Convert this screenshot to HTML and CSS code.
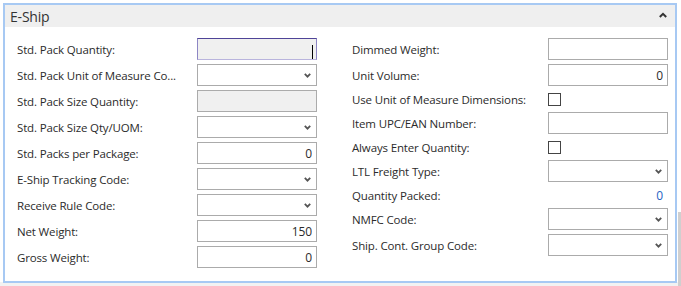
FILE: index.html
```html
<!DOCTYPE html>
<html lang="en">

<head>
    <meta charset="UTF-8">
    <title>Item Card - E-Ship</title>
    <link rel="stylesheet" href="styles.css">
</head>

<body>
    <div id="page">
        <!-- FastTab: E-Ship -->
        <div class="fasttab">
            <div class="fasttab-head">
                <span class="fasttab-title">E-Ship</span>
                <svg class="collapse-icon" width="8" height="6" viewBox="0 0 8 6">
                    <path d="M0.8 5 L4 1.8 L7.2 5" fill="none" stroke="#333" stroke-width="2"/>
                </svg>
            </div>
            <div class="fasttab-body">
                <!-- Left column -->
                <div class="field-col left-col">
                    <div class="field-row">
                        <label>Std. Pack Quantity:</label>
                        <div class="ctl">
                            <input class="txt dim focused" type="text" value="" disabled>
                            <span class="caret"></span>
                        </div>
                    </div>
                    <div class="field-row">
                        <label>Std. Pack Unit of Measure Co...</label>
                        <div class="ctl">
                            <select class="sel"><option></option></select>
                            <svg class="chev" width="7" height="5" viewBox="0 0 7 5"><path d="M0.8 0.8 L3.5 3.6 L6.2 0.8" fill="none" stroke="#555" stroke-width="1.8"/></svg>
                        </div>
                    </div>
                    <div class="field-row">
                        <label>Std. Pack Size Quantity:</label>
                        <div class="ctl"><input class="txt dim" type="text" value="" disabled></div>
                    </div>
                    <div class="field-row">
                        <label>Std. Pack Size Qty/UOM:</label>
                        <div class="ctl">
                            <select class="sel"><option></option></select>
                            <svg class="chev" width="7" height="5" viewBox="0 0 7 5"><path d="M0.8 0.8 L3.5 3.6 L6.2 0.8" fill="none" stroke="#555" stroke-width="1.8"/></svg>
                        </div>
                    </div>
                    <div class="field-row">
                        <label>Std. Packs per Package:</label>
                        <div class="ctl"><input class="txt num" type="text" value="0"></div>
                    </div>
                    <div class="field-row">
                        <label>E-Ship Tracking Code:</label>
                        <div class="ctl">
                            <select class="sel"><option></option></select>
                            <svg class="chev" width="7" height="5" viewBox="0 0 7 5"><path d="M0.8 0.8 L3.5 3.6 L6.2 0.8" fill="none" stroke="#555" stroke-width="1.8"/></svg>
                        </div>
                    </div>
                    <div class="field-row">
                        <label>Receive Rule Code:</label>
                        <div class="ctl">
                            <select class="sel"><option></option></select>
                            <svg class="chev" width="7" height="5" viewBox="0 0 7 5"><path d="M0.8 0.8 L3.5 3.6 L6.2 0.8" fill="none" stroke="#555" stroke-width="1.8"/></svg>
                        </div>
                    </div>
                    <div class="field-row">
                        <label>Net Weight:</label>
                        <div class="ctl"><input class="txt num" type="text" value="150"></div>
                    </div>
                    <div class="field-row">
                        <label>Gross Weight:</label>
                        <div class="ctl"><input class="txt num" type="text" value="0"></div>
                    </div>
                </div>

                <!-- Right column -->
                <div class="field-col right-col">
                    <div class="field-row">
                        <label>Dimmed Weight:</label>
                        <div class="ctl"><input class="txt num" type="text" value=""></div>
                    </div>
                    <div class="field-row">
                        <label>Unit Volume:</label>
                        <div class="ctl"><input class="txt num" type="text" value="0"></div>
                    </div>
                    <div class="field-row short">
                        <label>Use Unit of Measure Dimensions:</label>
                        <div class="ctl"><input class="chk" type="checkbox"></div>
                    </div>
                    <div class="field-row">
                        <label>Item UPC/EAN Number:</label>
                        <div class="ctl"><input class="txt" type="text" value=""></div>
                    </div>
                    <div class="field-row short">
                        <label>Always Enter Quantity:</label>
                        <div class="ctl"><input class="chk" type="checkbox"></div>
                    </div>
                    <div class="field-row">
                        <label>LTL Freight Type:</label>
                        <div class="ctl">
                            <select class="sel"><option></option></select>
                            <svg class="chev" width="7" height="5" viewBox="0 0 7 5"><path d="M0.8 0.8 L3.5 3.6 L6.2 0.8" fill="none" stroke="#555" stroke-width="1.8"/></svg>
                        </div>
                    </div>
                    <div class="field-row short">
                        <label>Quantity Packed:</label>
                        <div class="ctl"><span class="readonly-num">0</span></div>
                    </div>
                    <div class="field-row">
                        <label>NMFC Code:</label>
                        <div class="ctl">
                            <select class="sel"><option></option></select>
                            <svg class="chev" width="7" height="5" viewBox="0 0 7 5"><path d="M0.8 0.8 L3.5 3.6 L6.2 0.8" fill="none" stroke="#555" stroke-width="1.8"/></svg>
                        </div>
                    </div>
                    <div class="field-row">
                        <label>Ship. Cont. Group Code:</label>
                        <div class="ctl">
                            <select class="sel"><option></option></select>
                            <svg class="chev" width="7" height="5" viewBox="0 0 7 5"><path d="M0.8 0.8 L3.5 3.6 L6.2 0.8" fill="none" stroke="#555" stroke-width="1.8"/></svg>
                        </div>
                    </div>
                </div>
            </div>
        </div>
        <!-- page scrollbar -->
        <div class="vscroll"><div class="vscroll-thumb"></div></div>
    </div>
</body>

</html>
```

FILE: styles.css
```css
/* Basic reset */
body,
html {
    margin: 0;
    padding: 0;
    height: 100%;
    overflow: hidden;
    background: #fff;
    font-family: "Segoe UI", "Open Sans", sans-serif;
    font-size: 11.5px;
    letter-spacing: -0.15px;
    color: #2b2b2b;
}

#page {
    display: flex;
    height: 286px;
    padding: 3px 0 0 3px;
    box-sizing: border-box;
    background: linear-gradient(to bottom, #fff 282px, #f2f2f2 282px);
}

/* FastTab frame */
.fasttab {
    width: 674px;
    height: 280px;
    box-sizing: border-box;
    border: 2px solid #a7c9f3;
    background: #fff;
}

.fasttab-head {
    display: flex;
    align-items: center;
    justify-content: space-between;
    height: 22px;
    padding: 0 8px 0 5px;
    background: #efefef;
}

.fasttab-title {
    font-size: 14px;
    letter-spacing: -0.2px;
    color: #333;
}

.collapse-icon {
    margin-top: -3px;
}

.fasttab-body {
    display: flex;
    gap: 35px;
    padding: 11px 0 0 12px;
}

/* Field columns */
.field-col {
    display: flex;
    flex-direction: column;
    gap: 4px;
}

.left-col {
    width: 300px;
}

.right-col {
    width: 316px;
}

.field-row {
    display: flex;
    align-items: center;
    justify-content: space-between;
    height: 22px;
}

.field-row.short {
    height: 18px;
}

.field-row label {
    white-space: nowrap;
}

.ctl {
    position: relative;
    display: flex;
    align-items: center;
    width: 120px;
    height: 100%;
}

/* Text boxes */
.txt,
.sel {
    width: 120px;
    height: 22px;
    margin: 0;
    padding: 0 4px;
    box-sizing: border-box;
    border: 1px solid #ababab;
    background: #fff;
    font-family: inherit;
    font-size: 12px;
    letter-spacing: inherit;
    color: #2b2b2b;
    outline: none;
    border-radius: 0;
    -webkit-appearance: none;
    appearance: none;
}

.txt.num {
    text-align: right;
}

.txt.dim {
    background: #f0f0f0;
}

.txt.focused {
    border-color: #4f4497 #8d86c4 #b9b4dd #8d86c4;
}

.caret {
    position: absolute;
    right: 4px;
    top: 7px;
    width: 1px;
    height: 14px;
    background: #000;
}

.chev {
    position: absolute;
    right: 6px;
    top: 9px;
    pointer-events: none;
}

/* Check boxes */
.chk {
    width: 13px;
    height: 13px;
    margin: 0;
    border: 1px solid #444;
    background: #fff;
    border-radius: 0;
    -webkit-appearance: none;
    appearance: none;
}

.readonly-num {
    width: 100%;
    padding-right: 5px;
    text-align: right;
    font-size: 12px;
    color: #2563c4;
}

/* Scrollbar strip on the right */
.vscroll {
    display: flex;
    flex-direction: column;
    justify-content: flex-end;
    width: 3px;
    margin: -3px 0 0 1px;
}

.vscroll-thumb {
    height: 74px;
    background: #cfcfcf;
}
```
